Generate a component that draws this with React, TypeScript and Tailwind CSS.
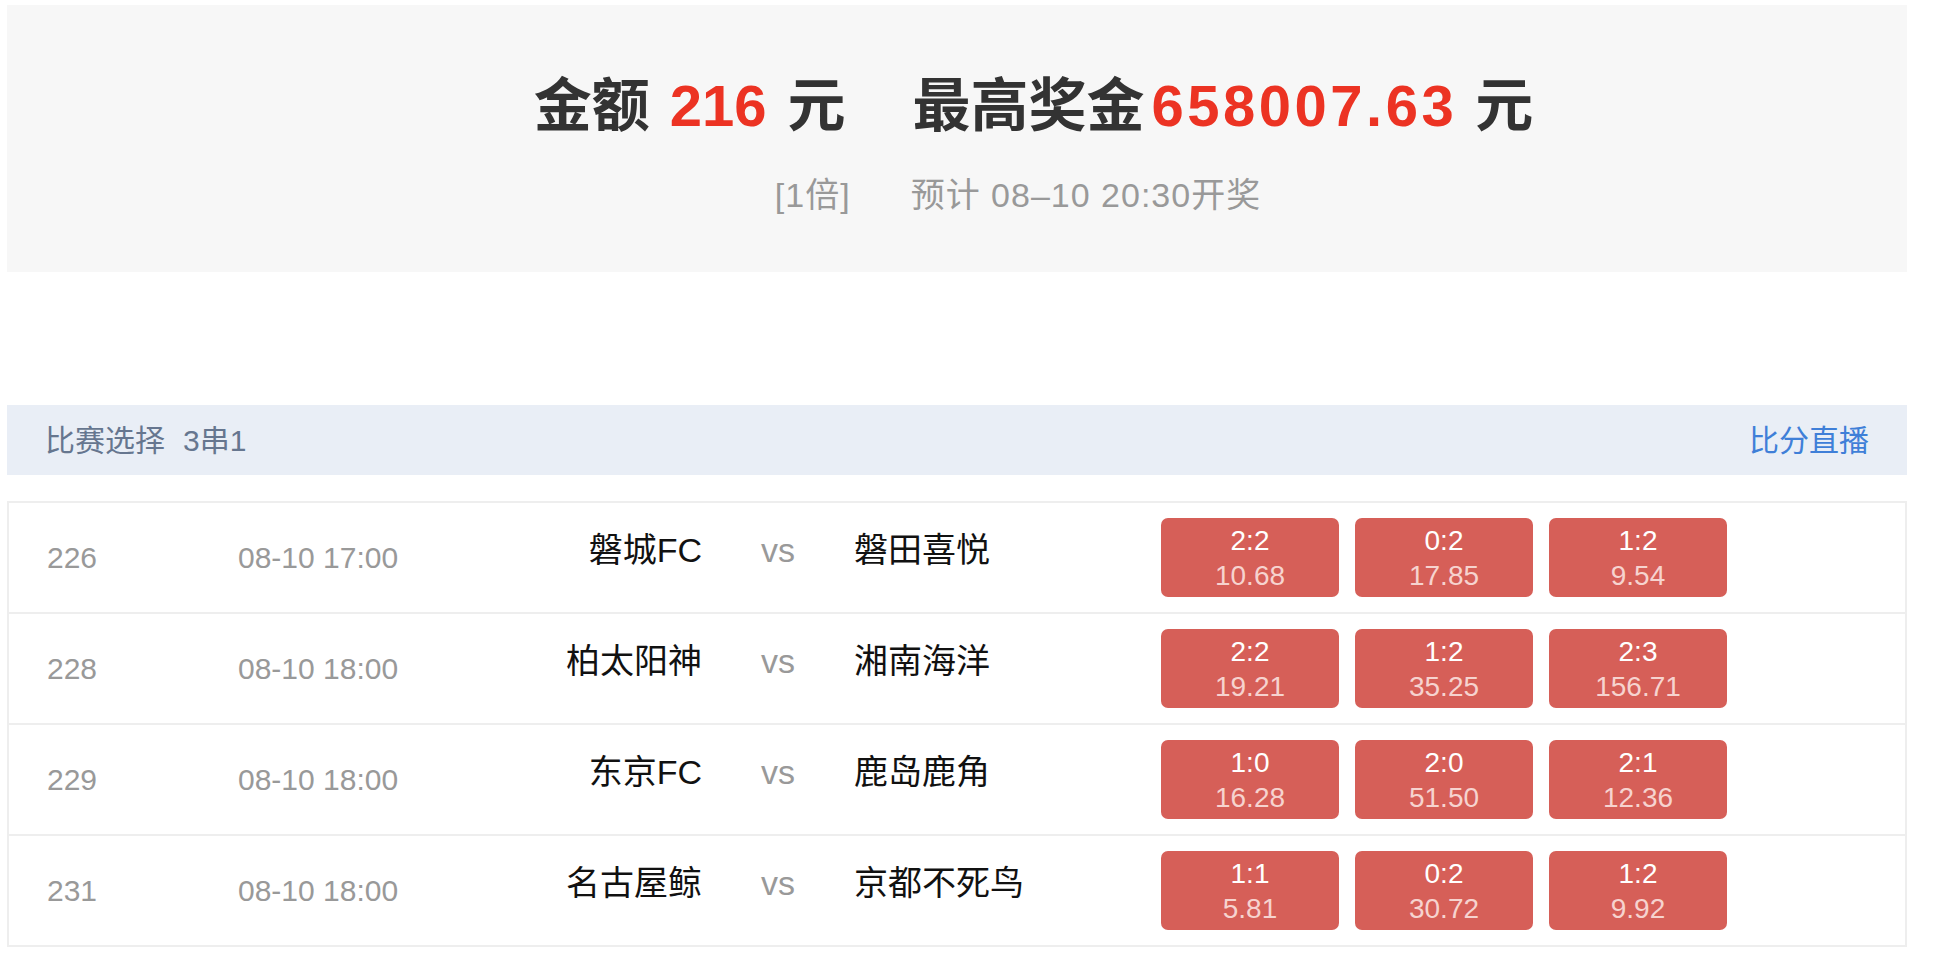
import React from "react";

interface Match {
    no: string; // Match number
    time: string; // Kick-off time
    home: string;
    away: string;
    picks: [string, string][]; // [score, odds]
}

const matches: Match[] = [
    { no: "226", time: "08-10 17:00", home: "磐城FC", away: "磐田喜悦", picks: [["2:2", "10.68"], ["0:2", "17.85"], ["1:2", "9.54"]] },
    { no: "228", time: "08-10 18:00", home: "柏太阳神", away: "湘南海洋", picks: [["2:2", "19.21"], ["1:2", "35.25"], ["2:3", "156.71"]] },
    { no: "229", time: "08-10 18:00", home: "东京FC", away: "鹿岛鹿角", picks: [["1:0", "16.28"], ["2:0", "51.50"], ["2:1", "12.36"]] },
    { no: "231", time: "08-10 18:00", home: "名古屋鲸", away: "京都不死鸟", picks: [["1:1", "5.81"], ["0:2", "30.72"], ["1:2", "9.92"]] },
];

const App = () => {
    return (
        <div className="min-h-screen bg-white font-['Liberation_Sans','Noto_Sans_CJK_SC',sans-serif]">
            <div className="w-[1900px] ml-[7px] pt-[5px]">
                {/* Summary Panel */}
                <div className="bg-[#f7f7f7] pt-[65px] pb-[56px] pl-[140px] flex flex-col items-center">
                    <div className="flex items-baseline pl-[13px] text-[58px] leading-[72px] font-bold text-[#333333] whitespace-nowrap">
                        <span>金额</span>
                        <span className="ml-[20px] text-[#ec3323]">216</span>
                        <span className="ml-[21px]">元</span>
                        <span className="ml-[67px]">最高奖金</span>
                        <span className="ml-[7px] text-[#ec3323] tracking-[3.5px]">658007.63</span>
                        <span className="ml-[18px]">元</span>
                    </div>
                    <div className="mt-[32px] pr-[18px] text-[34px] leading-[42px] tracking-[1px] text-[#999999] whitespace-nowrap">
                        <span>[1倍]</span>
                        <span className="ml-[60px]">预计 08–10 20:30开奖</span>
                    </div>
                </div>

                {/* Section Header */}
                <div className="mt-[133px] h-[70px] bg-[#e9eef6] px-[38px] flex items-center justify-between text-[30px]">
                    <div className="text-[#66768f]">
                        比赛选择<span className="ml-[18px]">3串1</span>
                    </div>
                    <div className="text-[#3f7fd8]">比分直播</div>
                </div>

                {/* Match List */}
                <div className="mt-[26px] border-2 border-[#eeeeee]">
                    {matches.map((m, i) => (
                        <div
                            key={m.no}
                            className={`flex items-center pl-[38px] ${
                                i < matches.length - 1 ? "h-[111px] border-b-2 border-[#eeeeee]" : "h-[109px]"
                            }`}
                        >
                            <div className="w-[191px] text-[30px] leading-[30px] text-[#999999]">{m.no}</div>
                            <div className="w-[170px] text-[30px] leading-[30px] text-[#999999] whitespace-nowrap">{m.time}</div>
                            <div className="w-[294px] text-right text-[34px] leading-[34px] text-[#111111] pb-[16px]">{m.home}</div>
                            <div className="w-[152px] text-center text-[34px] leading-[34px] text-[#999999] pb-[16px]">vs</div>
                            <div className="w-[307px] text-[34px] leading-[34px] text-[#111111] pb-[16px] whitespace-nowrap">{m.away}</div>
                            <div className="flex gap-[16px]">
                                {m.picks.map(([score, odds]) => (
                                    <div
                                        key={score + odds}
                                        className="w-[178px] h-[79px] rounded-[7px] bg-[#d65f58] flex flex-col items-center justify-center text-[28px] leading-[35px]"
                                    >
                                        <span className="text-white">{score}</span>
                                        <span className="text-[#f6d3cf]">{odds}</span>
                                    </div>
                                ))}
                            </div>
                        </div>
                    ))}
                </div>
            </div>
        </div>
    );
};

export default App;
